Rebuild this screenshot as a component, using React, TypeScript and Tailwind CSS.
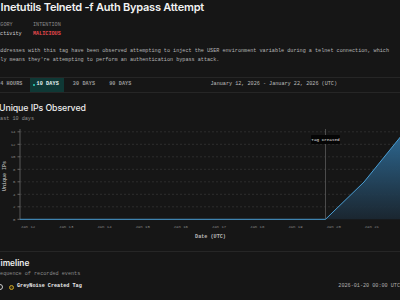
import React from "react";

const mono = "font-['Liberation_Mono','DejaVu_Sans_Mono',monospace]";
const sans = "font-['Inter','Liberation_Sans',sans-serif]";

function Chart() {
  const yTicks = [0, 2, 4, 6, 8, 10, 12, 14];
  const y0 = 218.3;
  const step = 6.25;
  const xLabels = ["Jan 12", "Jan 13", "Jan 14", "Jan 15", "Jan 16", "Jan 17", "Jan 18", "Jan 19", "Jan 20", "Jan 21"];
  const line = `M20,${y0} L325.5,${y0} L364,181 L406,129`;
  const area = `${line} L406,${y0} L20,${y0} Z`;
  return (
    <svg width="412" height="116" className="block">
      <defs>
        <linearGradient id="fillg" x1="0" y1="0" x2="0" y2="1">
          <stop offset="0%" stopColor="#2f6f9c" stopOpacity="0.95" />
          <stop offset="100%" stopColor="#1b2833" stopOpacity="0.9" />
        </linearGradient>
      </defs>
      <g transform="translate(12,-124)">
        {yTicks.map((t) => {
          const y = y0 - t * step;
          return (
            <g key={t}>
              {t > 0 && (
                <line x1="20" x2="412" y1={y} y2={y} stroke="#333333" strokeWidth="0.8" strokeDasharray="2 2" />
              )}
              <line x1="17.5" x2="20" y1={y} y2={y} stroke="#777" strokeWidth="0.8" />
              <text x="15.5" y={y + 1.4} textAnchor="end" fontSize="4" fill="#8a8a8a" fontFamily="Liberation Mono, monospace">
                {t}
              </text>
            </g>
          );
        })}
        <line x1="20" x2="20" y1="128" y2={y0} stroke="#6a6a6a" strokeWidth="0.8" />
        {xLabels.map((l, i) => (
          <text key={l} x={28 + i * 38.2} y="227" textAnchor="middle" fontSize="4" fill="#8a8a8a" fontFamily="Liberation Mono, monospace">
            {l}
          </text>
        ))}
        <path d={area} fill="url(#fillg)" />
        <line x1="325.5" x2="325.5" y1="128" y2={y0} stroke="#5a5a5a" strokeWidth="0.8" />
        <path d={line} fill="none" stroke="#4a9fd6" strokeWidth="1" />
        <rect x="311" y="134" width="29" height="9" fill="#050505" rx="1" />
        <text x="325.5" y="140" textAnchor="middle" fontSize="4.3" fill="#e8e8e8" fontFamily="Liberation Mono, monospace">
          Tag Created
        </text>
        <text
          x="5.5"
          y="175"
          textAnchor="middle"
          fontSize="5"
          fontWeight="bold"
          fill="#a8a8a8"
          fontFamily="Liberation Mono, monospace"
          transform="rotate(-90 5.5 175)"
        >
          Unique IPs
        </text>
        <text x="210.5" y="236.5" textAnchor="middle" fontSize="5.15" fontWeight="bold" fill="#b8b8b8" fontFamily="Liberation Mono, monospace">
          Date (UTC)
        </text>
      </g>
    </svg>
  );
}

export default function App() {
  return (
    <div className="w-[400px] h-[300px] overflow-hidden bg-[#161616]">
      <div className="-ml-[12px] w-[416px]">
        <h1 className={`${sans} -ml-[14px] text-[11px] leading-[14px] font-semibold tracking-[-0.02em] text-[#f2f2f2] whitespace-nowrap`}>
          GNU Inetutils Telnetd -f Auth Bypass Attempt
        </h1>
        <div className={`${mono} mt-[6.5px] flex text-[5.15px] leading-[9px] whitespace-nowrap`}>
          <div className="w-[45px]">
            <div className="text-[#8a8a8a] uppercase">Category</div>
            <div className="ml-[9px] text-[#d0d0d0]">activity</div>
          </div>
          <div>
            <div className="text-[#8a8a8a] uppercase">Intention</div>
            <div className="text-[#e5484d] font-bold uppercase">Malicious</div>
          </div>
        </div>
        <div className={`${mono} mt-[8px] text-[5.15px] leading-[9px] text-[#b4b4b4] whitespace-nowrap`}>
          <div>IP addresses with this tag have been observed attempting to inject the USER environment variable during a telnet connection, which</div>
          <div>likely means they're attempting to perform an authentication bypass attack.</div>
        </div>
        <div className={`${mono} mt-[12.5px] flex h-[16px] items-center border-y border-[#262626] text-[5.15px] whitespace-nowrap`}>
          <span className="ml-[9px] font-bold uppercase tracking-[0.02em] text-[#9a9a9a]">24 Hours</span>
          <span className="ml-[7px] flex h-[14px] items-center gap-[2px] bg-[#0f3835] pl-[3px] pr-[5px] font-bold uppercase tracking-[0.02em] text-[#e8f4f2]">
            <span className="h-[2px] w-[2px] rounded-full bg-[#2dd4bf]" />
            10 Days
          </span>
          <span className="ml-[9px] font-bold uppercase tracking-[0.02em] text-[#9a9a9a]">30 Days</span>
          <span className="ml-[14px] font-bold uppercase tracking-[0.02em] text-[#9a9a9a]">90 Days</span>
          <span className="ml-[79px] text-[#bdbdbd]">January 12, 2026 - January 22, 2026 (UTC)</span>
        </div>
        <div className={`${sans} ml-[11px] mt-[8.5px] text-[8.8px] leading-[12px] font-medium tracking-[-0.01em] text-[#ececec] whitespace-nowrap`}>
          Unique IPs Observed
        </div>
        <div className={`${mono} ml-[9px] mt-[1px] text-[5.15px] leading-[8px] text-[#8f8f8f] whitespace-nowrap`}>Last 10 days</div>
        <div className="mt-[2.5px]">
          <Chart />
        </div>
        <div className="mt-[10px] border-t border-[#262626]" />
        <div className={`${sans} ml-[7px] mt-[6px] text-[8.3px] leading-[10px] font-semibold text-[#ececec] whitespace-nowrap`}>Timeline</div>
        <div className={`${mono} ml-[9px] mt-[1.5px] text-[5.15px] leading-[8px] text-[#8a8a8a] whitespace-nowrap`}>Sequence of recorded events</div>
        <div className={`${mono} mt-[4.5px] flex h-[10px] items-center pr-[4px] text-[5.15px] whitespace-nowrap`}>
          <span className="ml-[9px] h-[6px] w-[6px] rounded-full border border-[#cfcfcf]" />
          <span className="ml-[5.5px] h-[5px] w-[5px] rounded-full border-[1.3px] border-[#c9a227] bg-[#3a3112]" />
          <span className="ml-[3.5px] font-bold text-[#ececec]">GreyNoise Created Tag</span>
          <span className="ml-auto text-[#b0b0b0]">2026-01-20 00:00 UTC</span>
        </div>
      </div>
    </div>
  );
}
